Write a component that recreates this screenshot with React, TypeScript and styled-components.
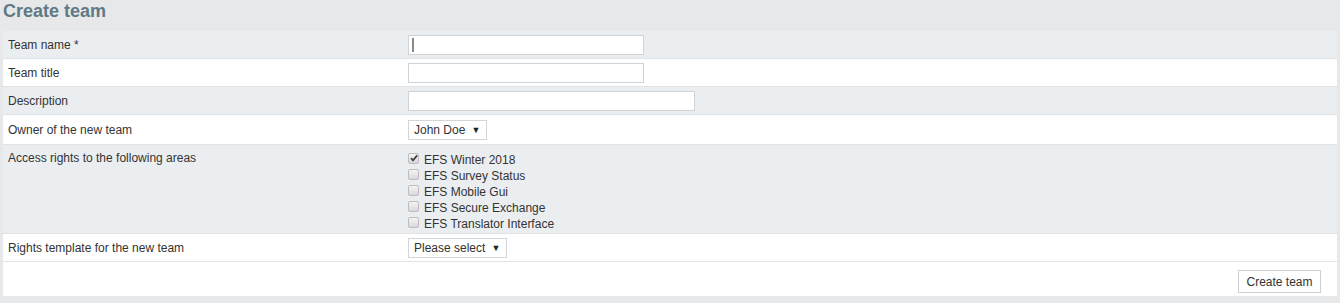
import React from 'react';
import styled, { createGlobalStyle } from 'styled-components';

const GlobalStyle = createGlobalStyle`
  html, body {
    margin: 0;
    padding: 0;
    background: #e7e8ea;
  }
  body {
    font-family: "Liberation Sans", Arial, sans-serif;
    font-size: 12px;
    color: #333;
  }
`;

const Page = styled.div`
  width: 1340px;
  height: 303px;
  padding: 0 3px;
  box-sizing: border-box;
  overflow: hidden;
`;

const Title = styled.h1`
  margin: 0;
  height: 31px;
  padding-top: 1px;
  box-sizing: border-box;
  font-size: 18px;
  line-height: 20px;
  font-weight: bold;
  color: #5f7985;
`;

const Panel = styled.div`
  display: flex;
  flex-direction: column;
  background: #fff;
`;

const Row = styled.div<{ $shaded?: boolean; $top?: boolean; $height?: number }>`
  display: grid;
  grid-template-columns: 400px 1fr;
  align-items: ${(p) => (p.$top ? 'start' : 'center')};
  min-height: ${(p) => p.$height ?? 28}px;
  padding: ${(p) => (p.$top ? '5px' : '0')} 5px 0;
  box-sizing: border-box;
  background: ${(p) => (p.$shaded ? '#ebeef1' : '#fff')};
  border-bottom: 1px solid #e1e4e7;
`;

const Label = styled.div`
  line-height: 16px;
`;

const TextField = styled.div<{ $width: number }>`
  display: flex;
  align-items: center;
  width: ${(p) => p.$width}px;
  height: 20px;
  box-sizing: border-box;
  padding-left: 3px;
  background: #fff;
  border: 1px solid #cfd3d6;
`;

const Caret = styled.span`
  display: block;
  width: 2px;
  height: 14px;
  background: #8a8a8a;
`;

const SelectBox = styled.div`
  display: inline-flex;
  align-items: center;
  justify-self: start;
  height: 20px;
  box-sizing: border-box;
  padding: 0 6px 0 5px;
  background: #fff;
  border: 1px solid #d3d6d9;
  line-height: 18px;
`;

const Arrow = styled.span`
  margin-left: 6px;
  font-size: 9px;
  color: #222;
`;

const CheckList = styled.div`
  display: flex;
  flex-direction: column;
  margin-top: 2px;
`;

const CheckItem = styled.label`
  display: flex;
  align-items: center;
  height: 16px;
  line-height: 16px;
`;

const Box = styled.span`
  position: relative;
  width: 11px;
  height: 11px;
  margin-right: 5px;
  margin-top: -3px;
  box-sizing: border-box;
  border: 1px solid #bdbdbd;
  border-radius: 2px;
  background: linear-gradient(#f4f4f4, #d9d9d9);
`;

const Tick = styled.svg`
  position: absolute;
  left: 0;
  top: -1px;
`;

const Actions = styled.div`
  display: flex;
  justify-content: flex-end;
  padding: 8px 16px 2px;
  height: 34px;
  box-sizing: border-box;
  background: #fff;
`;

const Button = styled.button`
  height: 23px;
  width: 83px;
  padding: 0;
  background: #fff;
  border: 1px solid #cdd0d3;
  font-family: "Liberation Sans", Arial, sans-serif;
  font-size: 12px;
  color: #333;
`;

const areas = [
  { name: 'EFS Winter 2018', checked: true },
  { name: 'EFS Survey Status', checked: false },
  { name: 'EFS Mobile Gui', checked: false },
  { name: 'EFS Secure Exchange', checked: false },
  { name: 'EFS Translator Interface', checked: false },
];

const App: React.FC = () => {
  return (
    <Page>
      <GlobalStyle />
      <Title>Create team</Title>
      <Panel>
        <Row $shaded>
          <Label>Team name *</Label>
          <TextField $width={236}>
            <Caret />
          </TextField>
        </Row>
        <Row>
          <Label>Team title</Label>
          <TextField $width={236} />
        </Row>
        <Row $shaded>
          <Label>Description</Label>
          <TextField $width={287} />
        </Row>
        <Row $height={30}>
          <Label>Owner of the new team</Label>
          <SelectBox>
            John Doe<Arrow>▼</Arrow>
          </SelectBox>
        </Row>
        <Row $shaded $top $height={89}>
          <Label>Access rights to the following areas</Label>
          <CheckList>
            {areas.map((area) => (
              <CheckItem key={area.name}>
                <Box>
                  {area.checked && (
                    <Tick width="10" height="10" viewBox="0 0 10 10">
                      <path d="M2 5.2 L4 7.4 L8.2 2.4" fill="none" stroke="#444" strokeWidth="1.8" />
                    </Tick>
                  )}
                </Box>
                {area.name}
              </CheckItem>
            ))}
          </CheckList>
        </Row>
        <Row>
          <Label>Rights template for the new team</Label>
          <SelectBox>
            Please select<Arrow>▼</Arrow>
          </SelectBox>
        </Row>
        <Actions>
          <Button>Create team</Button>
        </Actions>
      </Panel>
    </Page>
  );
};

export default App;
